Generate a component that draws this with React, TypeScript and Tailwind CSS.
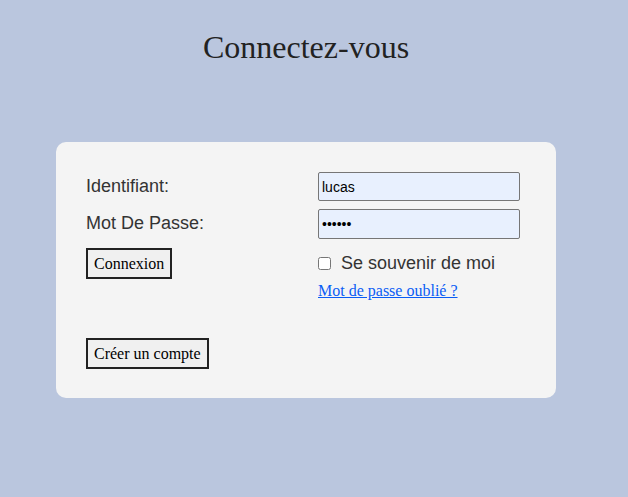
import React from 'react';

export default function App() {
  return (
    <div className="min-h-[497px] w-full bg-[#bac6de]" style={{ fontFamily: '"Liberation Sans", Arial, sans-serif' }}>
      <div className="w-[612px]">
        <h1 className="pt-[27px] text-center text-[32px] leading-[40px] text-[#222]" style={{ fontFamily: '"Liberation Serif", "Times New Roman", serif' }}>
          Connectez-vous
        </h1>

        <div className="mx-auto mt-[75px] w-[500px] rounded-[10px] bg-[#f4f4f4] pt-[30px] pb-[29px] pl-[30px]">
          <div className="grid grid-cols-[232px_202px]">
            <label className="flex h-[29px] items-center text-[18px] text-[#333]">Identifiant:</label>
            <input
              type="text"
              defaultValue="lucas"
              className="h-[29px] w-[202px] rounded-[2px] border border-[#767676] bg-[#e8f0fe] px-[3px] text-[14px] text-black outline-none"
            />

            <label className="mt-2 flex h-[29px] items-center text-[18px] text-[#333]">Mot De Passe:</label>
            <input
              type="password"
              defaultValue="secret"
              className="mt-2 h-[30px] w-[202px] rounded-[2px] border border-[#767676] bg-[#e8f0fe] px-[3px] text-[14px] text-black outline-none"
            />

            <div className="mt-[9px]">
              <button
                className="h-[31px] border-2 border-[#222] bg-[#f0f0f0] px-[6px] text-[16px] text-black"
                style={{ fontFamily: '"Liberation Serif", "Times New Roman", serif' }}
              >
                Connexion
              </button>
            </div>
            <div className="mt-[9px]">
              <label className="flex h-[30px] items-center">
                <input type="checkbox" className="m-0 h-[13px] w-[13px]" />
                <span className="ml-[10px] text-[18px] text-[#333]">Se souvenir de moi</span>
              </label>
              <a
                href="#"
                className="mt-[3px] block text-[16px] leading-[20px] text-[#0a5cf5] underline"
                style={{ fontFamily: '"Liberation Serif", "Times New Roman", serif' }}
              >
                Mot de passe oublié ?
              </a>
            </div>
          </div>

          <button
            className="mt-[37px] h-[31px] border-2 border-[#222] bg-[#f0f0f0] px-[6px] text-[16px] text-black"
            style={{ fontFamily: '"Liberation Serif", "Times New Roman", serif' }}
          >
            Créer un compte
          </button>
        </div>
      </div>
    </div>
  );
}
